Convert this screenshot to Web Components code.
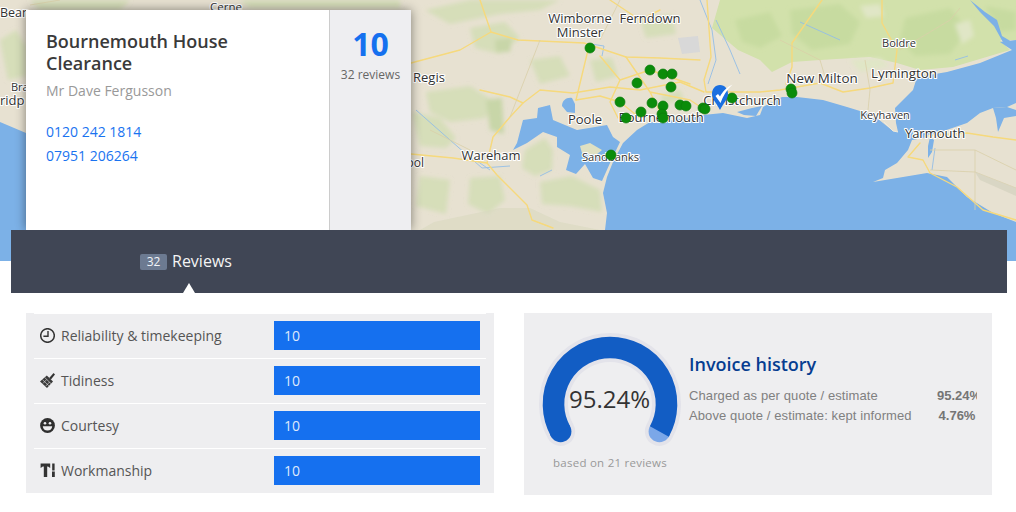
<!DOCTYPE html>
<html lang="en">
<head>
<meta charset="utf-8">
<title>Bournemouth House Clearance</title>
<style>
html,body{margin:0;padding:0;background:#fff;}
body{width:1016px;height:512px;overflow:hidden;font-family:"Open Sans",sans-serif;}
.lower{display:flex;align-items:flex-start;gap:30px;padding:20px 24px 0 26px;}
</style>
</head>
<body>
<profile-hero>
  <map-canvas slot="map"></map-canvas>
  <trader-card slot="card" name="Bournemouth House Clearance" contact="Mr Dave Fergusson" score="10" reviews="32 reviews">
    <a href="#">0120 242 1814</a>
    <a href="#">07951 206264</a>
  </trader-card>
  <review-tabs slot="tabs" count="32" label="Reviews"></review-tabs>
</profile-hero>
<div class="lower">
  <rating-list>
    <rating-row icon="clock" label="Reliability &amp; timekeeping" value="10"></rating-row>
    <rating-row icon="brush" label="Tidiness" value="10"></rating-row>
    <rating-row icon="smile" label="Courtesy" value="10"></rating-row>
    <rating-row icon="tools" label="Workmanship" value="10"></rating-row>
  </rating-list>
  <invoice-panel></invoice-panel>
</div>
<script>
function shadow(el, html){ el.attachShadow({mode:'open'}).innerHTML = html; }

class ProfileHero extends HTMLElement{
  connectedCallback(){ if(this.shadowRoot) return;
    shadow(this,`<style>
      :host{display:grid;width:1016px;height:293px;}
      .map,.content{grid-area:1/1;}
      .map{height:261px;overflow:hidden;}
      .content{display:flex;flex-direction:column;padding-top:10px;min-width:0;}
      .card{display:block;margin-left:26px;}
      .tabs{display:block;margin:0 9px 0 11px;}
    </style>
    <div class="map"><slot name="map"></slot></div>
    <div class="content">
      <div class="card"><slot name="card"></slot></div>
      <div class="tabs"><slot name="tabs"></slot></div>
    </div>`);
  }
}
customElements.define('profile-hero',ProfileHero);

class MapCanvas extends HTMLElement{
  connectedCallback(){ if(this.shadowRoot) return;
    const labels=[
      ['Cerne',226,11,11.5,'middle'],['Bean',0,17,12.5,'start'],['Bra',11,91,11,'start'],['ridp',0,105,13,'start'],
      ['Regis',413,82,13,'start'],['ool',424,167,12,'end'],
      ['Wimborne',580,23,13,'middle'],['Minster',580,37,13,'middle'],['Ferndown',650,23,13,'middle'],
      ['Poole',585,124,13,'middle'],['Wareham',491,160,13,'middle'],['Sandbanks',610.5,161,11.2,'middle'],
      ['Bournemouth',661,122,13,'middle'],['Christchurch',742,105,13,'middle'],['New Milton',822,83,13.4,'middle'],
      ['Lymington',904,78,13.4,'middle'],['Boldre',899,47,11,'middle'],['Keyhaven',885,119,11,'middle'],['Yarmouth',935,138,13,'middle']
    ].map(l=>`<text x="${l[1]}" y="${l[2]}" font-size="${l[3]}" text-anchor="${l[4]}">${l[0]}</text>`).join('');
    const dots=[[590,48],[650,70],[663,74],[672,74],[637,83],[671,87],[620,102],[652,103],[663,106],[680,105],[686,106],[703,108],[705,109],[641,112],[662,114],[663,118],[626,118],[732,98],[791,89],[792,93],[611,155]]
      .map(d=>`<circle cx="${d[0]}" cy="${d[1]}" r="5"/>`).join('');
    shadow(this,`<style>
      :host{display:block;width:1016px;height:261px;}
      svg{display:block;}
      .labels text{font-family:"Open Sans",sans-serif;fill:#333;stroke:#fff;stroke-width:2.2px;paint-order:stroke;stroke-linejoin:round;}
      .road{fill:none;stroke:#f6d97c;stroke-width:1.4;stroke-linejoin:round;stroke-linecap:round;}
      .minor{fill:none;stroke:#d9cfa8;stroke-width:.8;}
      .river{fill:none;stroke:#93bde6;stroke-width:.9;}
      .dots circle{fill:#0a8c0a;stroke:#0b7a0b;stroke-width:.7;}
    </style>
    <svg width="1016" height="261" viewBox="0 0 1016 261">
      <defs>
        <filter id="soft" x="-5%" y="-5%" width="110%" height="110%"><feGaussianBlur stdDeviation="2.2"/></filter>
        <filter id="fine" x="0" y="0" width="100%" height="100%"><feGaussianBlur stdDeviation=".45"/></filter>
      </defs>
      <rect width="1016" height="261" fill="#e7e1d1"/>
      <g filter="url(#fine)">
      <path d="M720 0L712 28L738 50L760 60L772 72L792 62L820 60L870 57L897 63L920 70L953 67L1010 50L1000 40L1016 40V0Z" fill="#d2e1ab"/>
      <g filter="url(#soft)">
        <g fill="#c7dba0">
          <path d="M790 10L840 4L860 22L850 44L812 50L792 34Z"/>
          <path d="M905 18L950 8L968 30L950 54L915 56L900 40Z"/>
          <path d="M985 6L1016 12V30L1000 32Z"/>
          <path d="M735 20L770 12L782 36L760 48L742 42Z"/>
        </g>
        <g fill="#e0e6c6">
          <path d="M955 24L970 20L974 36L962 44Z"/>
          <path d="M850 60L880 58L890 66L860 72Z"/>
          <path d="M860 6L880 4L884 16L866 18Z"/>
        </g>
        <g fill="#d6deb9">
          <path d="M426 92L470 86L492 100L486 118L450 122L430 112Z"/>
          <path d="M412 112L440 118L456 138L446 148L420 146Z"/>
          <path d="M470 178L500 176L505 200L488 214L468 204Z"/>
          <path d="M540 182L572 176L600 190L602 212L570 206L542 204Z"/>
          <path d="M525 150L545 138L553 150L552 170L535 176L522 168Z"/>
          <path d="M470 28L505 22L520 38L500 54L475 48Z"/>
          <path d="M425 10L470 0H560L540 10L500 14L450 24Z"/>
          <path d="M590 60L612 58L618 76L596 82Z"/>
          <path d="M420 176L450 180L446 214L416 206Z"/>
          <path d="M0 40L16 30L26 46V76L8 80Z"/>
          <path d="M30 0H130L120 10H40Z"/>
          <path d="M240 0H400V8H250Z"/>
          <path d="M530 60L560 56L570 76L540 84Z"/>
          <path d="M640 20L672 14L676 34L646 38Z"/>
          <path d="M660 96L680 90L684 100L664 104Z"/>
        </g>
        <g fill="#c8d6a8">
          <path d="M486 100L502 98L504 134L490 130Z"/>
          <path d="M495 40L512 38L510 52L496 52Z"/>
        </g>
      </g>
      <path d="M678 38L698 36L700 52L682 54Z" fill="#d8d8d8"/>
      <path d="M434 222L500 208L530 208L560 222L600 230H420Z" fill="#d9d8c0" opacity=".6"/>
      <!-- sea -->
      <g fill="#7cb1e7">
        <path d="M605 230L607 213L603 193L607 177L613 162L623 143L637 130L650 122L657 123L703 115L723 113L747 118L760 115L763 107L782 97L797 97L823 100L847 107L873 115L893 131L898 132L896 123L895 108L913 90L917 77L947 72L980 63L1012 50L1000 42L1016 40V103L1007 107L993 108L980 113L967 123L923 138L912 140L908 150L897 163L885 170L883 178L873 182L897 178L927 173L947 177L967 197L993 213L1016 222V261H605Z"/>
        <path d="M0 122L26 133L60 140V261H0Z"/>
        <path d="M610 163L602 181L593 178L585 164L576 174L566 170L570 155L557 147L557 137L543 132L527 143L513 150L517 143L523 120L537 118L538 108L550 105L553 120L577 130L607 125L613 137L620 142Z"/>
        <path d="M562 106C562 100 567 97 572 98L575 104L575 113L567 112Z"/>
        <path d="M737 112L752 108L762 106L756 116L744 115Z"/>
        <path d="M993 108L1007 107L1016 110V116L1004 118L998 132L996 118Z"/>
        <path d="M930 137L934 140L932 152L928 158L928 146Z"/>
        <path d="M970 0L985 12L997 20L1002 36L1012 42L1004 44L994 26L980 12Z"/>
      </g>
      <path d="M580 146L590 143L602 150L596 155L582 153Z" fill="#dfe0c2"/>
      <path d="M884 122L893 131L898 132" fill="none" stroke="#efeadc" stroke-width="1"/>
      <!-- rivers -->
      <path class="river" d="M700 0L712 30L716 60L708 84M716 20L730 50L740 74M591 44L604 46L602 56M416 110L450 140L482 168L510 166M470 156L490 170M800 22L840 40M955 60L968 56M935 148L932 170M540 176L552 170"/>
      <!-- roads -->
      <path class="road" d="M411 154L453 158L487 163L497 175L527 205L532 220L553 228"/>
      <path class="road" d="M487 163L493 137L510 117L523 103L540 90L573 93L610 87L640 90L680 82L704 92"/>
      <path class="road" d="M480 90L510 97L523 103M411 63L460 50L491 32L518 40L584 43L626 57L660 58L700 60"/>
      <path class="road" d="M588 50L582 75L576 100M491 32L480 0M707 0L711 57L704 80L706 92L760 92L780 90L820 83L843 92L870 88L893 83L897 50L882 23V0M822 0L792 43V67L786 84"/>
      <path class="road" d="M600 56L620 80L610 102L618 118M626 57L650 92L660 112M650 92L690 100L702 108M620 80L650 70L690 84M576 100L600 96L620 102L640 118M610 0L640 20L660 10"/>
      <path class="road" d="M920 143L908 157L923 160L930 173L957 187L983 210L1016 220M925 136L967 133L993 137L1016 140"/>
      <path class="minor" d="M930 150L975 150L1016 170M930 170L975 172L1016 188M975 150L975 210M900 50L950 20L960 8M780 40L820 60L826 80M865 60L870 90L868 110M30 5L60 0M430 130L470 150M510 117L540 40M620 0L600 40"/>
      <path d="M975 172L1016 188V196L980 180Z" fill="#d6d3c0" opacity=".8"/>
      </g>
      <g class="labels">${labels}</g>
      <g class="dots">${dots}</g>
      <path d="M720 85C715 85 712 89 712 94C712 99 717 104 720 110C723 104 728 99 728 94C728 89 725 85 720 85Z" fill="#1a6fe0"/>
      <path d="M715.5 96L720.5 103C723 96 726.5 90 732.5 84.5C726 87.5 722.5 92 720 96.5L718 94Z" fill="#fff"/>
    </svg>`);
  }
}
customElements.define('map-canvas',MapCanvas);

class TraderCard extends HTMLElement{
  connectedCallback(){ if(this.shadowRoot) return;
    const a=n=>this.getAttribute(n);
    shadow(this,`<style>
      :host{display:flex;width:385px;height:220px;background:#fff;box-shadow:0 0 10px rgba(0,0,0,.45);color:#333;font-family:"Open Sans",sans-serif;}
      .main{flex:1;min-width:0;padding:20px 20px 0;box-sizing:border-box;}
      h1{margin:0;font-size:18px;line-height:22px;font-weight:600;color:#3a3a3a;width:230px;}
      .who{margin-top:7px;font-size:14px;line-height:20px;color:#999;}
      .phones{display:flex;flex-direction:column;margin-top:19px;font-size:14px;line-height:24px;}
      ::slotted(a){color:#1a73f0;text-decoration:none;}
      .side{flex:none;width:81px;border-left:1px solid #ccc;background:#eeeef1;text-align:center;padding-top:14px;}
      .score{font-size:32px;line-height:40px;font-weight:700;color:#1570ef;}
      .count{margin-top:3px;font-size:12px;line-height:16px;color:#666;}
    </style>
    <div class="main">
      <h1>${a('name')}</h1>
      <div class="who">${a('contact')}</div>
      <div class="phones"><slot></slot></div>
    </div>
    <div class="side">
      <div class="score">${a('score')}</div>
      <div class="count">${a('reviews')}</div>
    </div>`);
  }
}
customElements.define('trader-card',TraderCard);

class ReviewTabs extends HTMLElement{
  connectedCallback(){ if(this.shadowRoot) return;
    shadow(this,`<style>
      :host{display:flex;align-items:center;height:63px;background:#404655;padding-left:129px;position:relative;font-family:"Open Sans",sans-serif;}
      .badge{width:27px;height:16px;border-radius:2px;background:#6c7a91;color:#f2f4f8;font-size:12px;line-height:16px;text-align:center;}
      .label{margin:0 0 2px 5px;font-size:16px;color:#f4f4f4;}
      .arrow{position:absolute;left:172px;bottom:0;width:0;height:0;border-left:6px solid transparent;border-right:6px solid transparent;border-bottom:10px solid #fff;}
    </style>
    <span class="badge">${this.getAttribute('count')}</span>
    <span class="label">${this.getAttribute('label')}</span>
    <span class="arrow"></span>`);
  }
}
customElements.define('review-tabs',ReviewTabs);

class RatingList extends HTMLElement{
  connectedCallback(){ if(this.shadowRoot) return;
    shadow(this,`<style>
      :host{display:flex;flex-direction:column;box-sizing:border-box;width:468px;height:180px;padding:0 8px;background:#eeeef0;}
    </style><slot></slot>`);
  }
}
customElements.define('rating-list',RatingList);

const ICONS={
  clock:`<circle cx="7.5" cy="7.5" r="6.8" fill="none" stroke="#333" stroke-width="1.5"/><path d="M8 3V8.2H3.4" fill="none" stroke="#333" stroke-width="1.4"/>`,
  brush:`<path d="M6.8 2.6L13 8.6L7 15L0 8.4Z" fill="#3a3a3a"/><path d="M2.6 6.8L8.8 12.8M4.8 4.6L11 10.6M3 10.4L6.6 6.6M5.8 13L9.6 9" stroke="#eeeef0" stroke-width=".6"/><path d="M9.2 5L13.6 0L15 1.6L10.9 6.6Z" fill="#333"/>`,
  smile:`<circle cx="7.5" cy="7.5" r="7.4" fill="#2f2f2f"/><circle cx="5" cy="5.2" r="1.3" fill="#eeeef0"/><circle cx="10" cy="5.2" r="1.3" fill="#eeeef0"/><path d="M2.8 8.2H12.2C12.2 11 10 12.6 7.5 12.6C5 12.6 2.8 11 2.8 8.2Z" fill="#eeeef0"/>`,
  tools:`<path d="M.6 .4H10.2V5L8 3.4H7.2V14H3.8V3.4H2.8L.6 5Z" fill="#333"/><path d="M12.2 .4H14.6V7.6H12.2ZM12 8.6H14.8V14H12Z" fill="#333"/>`
};
class RatingRow extends HTMLElement{
  connectedCallback(){ if(this.shadowRoot) return;
    const a=n=>this.getAttribute(n);
    shadow(this,`<style>
      :host{display:flex;align-items:flex-start;height:45px;box-sizing:border-box;border-top:1px solid #fff;padding:7px 6px 0 6px;font-family:"Open Sans",sans-serif;}
      svg{flex:none;width:15px;height:15px;margin:7px 6px 0 0;}
      .label{flex:1;min-width:0;font-size:14px;line-height:29px;color:#555;}
      .bar{flex:none;width:206px;height:29px;box-sizing:border-box;padding-left:10px;background:#1570ef;color:#dfe9fb;font-size:14px;line-height:29px;}
    </style>
    <svg viewBox="0 0 15 15">${ICONS[a('icon')]}</svg>
    <span class="label">${a('label')}</span>
    <span class="bar">${a('value')}</span>`);
  }
}
customElements.define('rating-row',RatingRow);

class InvoiceGauge extends HTMLElement{
  connectedCallback(){ if(this.shadowRoot) return;
    const arc="M23.6 100.4A56.5 56.5 0 1 1 122.4 100.4";
    shadow(this,`<style>
      :host{display:block;width:146px;font-family:"Open Sans",sans-serif;}
      svg{display:block;}
      text{font-family:"Open Sans",sans-serif;font-size:24px;fill:#333;}
      .cap{margin-top:4px;font-size:11.5px;line-height:16px;color:#999;text-align:center;letter-spacing:.25px;white-space:nowrap;}
    </style>
    <svg width="146" height="120" viewBox="0 0 146 120">
      <path d="${arc}" fill="none" stroke="#e3e3ea" stroke-width="29" stroke-linecap="round"/>
      <circle cx="122.4" cy="100.4" r="10.8" fill="#7ba7e8"/>
      <circle cx="23.6" cy="100.4" r="10.8" fill="#125dc4"/>
      <path d="${arc}" fill="none" stroke="#125dc4" stroke-width="21.6"/>
      <text x="72.5" y="77" text-anchor="middle">95.24%</text>
    </svg>
    <div class="cap">based on 21 reviews</div>`);
  }
}
customElements.define('invoice-gauge',InvoiceGauge);

class InvoicePanel extends HTMLElement{
  connectedCallback(){ if(this.shadowRoot) return;
    shadow(this,`<style>
      :host{display:flex;box-sizing:border-box;width:468px;height:182px;padding:18px 15px 0 13px;background:#eeeef0;gap:6px;}
      .info{flex:1;min-width:0;padding-top:21px;}
      h2{margin:0 0 10px;font:600 18px/24px "Open Sans",sans-serif;color:#063d90;}
      .row{display:flex;justify-content:space-between;font:13px/20px "Liberation Sans",Arial,sans-serif;color:#808080;}
      .row span{letter-spacing:.1px;}
      .row b{flex:none;width:40px;text-align:center;white-space:nowrap;overflow:hidden;color:#757575;}
    </style>
    <invoice-gauge></invoice-gauge>
    <div class="info">
      <h2>Invoice history</h2>
      <div class="row"><span>Charged as per quote / estimate</span><b>95.24%</b></div>
      <div class="row"><span>Above quote / estimate: kept informed</span><b>4.76%</b></div>
    </div>`);
  }
}
customElements.define('invoice-panel',InvoicePanel);
</script>
</body>
</html>
